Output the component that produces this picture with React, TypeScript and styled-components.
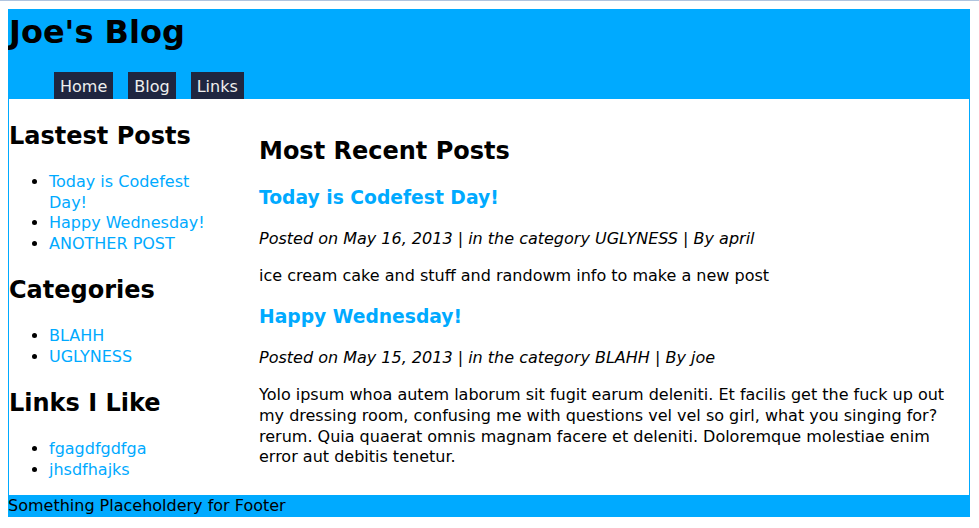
import React from "react";
import styled, { createGlobalStyle } from "styled-components";

const BLUE = "#00aaff";

const Global = createGlobalStyle`
  html {
    border-top: 1px solid #b0c4de;
  }
  body {
    margin: 8px;
    font-family: Verdana, "DejaVu Sans", sans-serif;
    font-size: 16px;
    line-height: 1.3;
    color: #000;
    background: #fff;
  }
`;

const Page = styled.div`
  width: 960px;
  border-left: 1px solid ${BLUE};
  border-right: 1px solid ${BLUE};
`;

const Header = styled.header`
  background: ${BLUE};
  margin: 0 -1px;
  padding: 0 0 0 1px;
`;

const SiteTitle = styled.h1`
  margin: 0;
  padding-top: 3px;
  font-size: 32px;
  font-weight: bold;
`;

const NavList = styled.ul`
  list-style: none;
  margin: 18px 0 0 0;
  padding: 0 0 0 45px;
  display: flex;
  gap: 15px;
`;

const NavItem = styled.li`
  background: #1f2640;
  color: #eeeeee;
  height: 27px;
  line-height: 29px;
  padding: 0 6px;
`;

const Body = styled.div`
  display: grid;
  grid-template-columns: 215px 1fr;
  column-gap: 35px;
`;

const Sidebar = styled.aside`
  padding-top: 2px;
`;

const SideHeading = styled.h2`
  font-size: 24px;
  margin: 20px 0;
`;

const SideList = styled.ul`
  margin: 16px 0;
  padding-left: 40px;

  &:last-child {
    margin-bottom: 14px;
  }
`;

const Link = styled.a`
  color: ${BLUE};
  text-decoration: none;
`;

const Main = styled.main`
  padding-top: 17px;
  padding-right: 8px;
`;

const MainHeading = styled.h2`
  font-size: 24px;
  margin: 20px 0 19px;
`;

const PostTitle = styled.h3`
  font-size: 18.72px;
  margin: 18.72px 0;
  color: ${BLUE};
`;

const Meta = styled.p`
  font-style: italic;
  margin: 16px 0;
`;

const Text = styled.p`
  margin: 16px 0;
`;

const Footer = styled.footer`
  background: ${BLUE};
  margin: 0 -1px;
  height: 22px;
  line-height: 22px;
`;

const posts = [
  {
    title: "Today is Codefest Day!",
    meta: "Posted on May 16, 2013 | in the category UGLYNESS | By april",
    body: "ice cream cake and stuff and randowm info to make a new post",
  },
  {
    title: "Happy Wednesday!",
    meta: "Posted on May 15, 2013 | in the category BLAHH | By joe",
    body:
      "Yolo ipsum whoa autem laborum sit fugit earum deleniti. Et facilis get the fuck up out my dressing room, confusing me with questions vel vel so girl, what you singing for? rerum. Quia quaerat omnis magnam facere et deleniti. Doloremque molestiae enim error aut debitis tenetur.",
  },
];

const sections = [
  { title: "Lastest Posts", items: ["Today is Codefest Day!", "Happy Wednesday!", "ANOTHER POST"] },
  { title: "Categories", items: ["BLAHH", "UGLYNESS"] },
  { title: "Links I Like", items: ["fgagdfgdfga", "jhsdfhajks"] },
];

export default function App() {
  return (
    <>
      <Global />
      <Page>
        <Header>
          <SiteTitle>Joe's Blog</SiteTitle>
          <NavList>
            <NavItem>Home</NavItem>
            <NavItem>Blog</NavItem>
            <NavItem>Links</NavItem>
          </NavList>
        </Header>
        <Body>
          <Sidebar>
            {sections.map((s) => (
              <React.Fragment key={s.title}>
                <SideHeading>{s.title}</SideHeading>
                <SideList>
                  {s.items.map((i) => (
                    <li key={i}>
                      <Link href="#">{i}</Link>
                    </li>
                  ))}
                </SideList>
              </React.Fragment>
            ))}
          </Sidebar>
          <Main>
            <MainHeading>Most Recent Posts</MainHeading>
            {posts.map((p) => (
              <React.Fragment key={p.title}>
                <PostTitle>{p.title}</PostTitle>
                <Meta>{p.meta}</Meta>
                <Text>{p.body}</Text>
              </React.Fragment>
            ))}
          </Main>
        </Body>
        <Footer>Something Placeholdery for Footer</Footer>
      </Page>
    </>
  );
}
